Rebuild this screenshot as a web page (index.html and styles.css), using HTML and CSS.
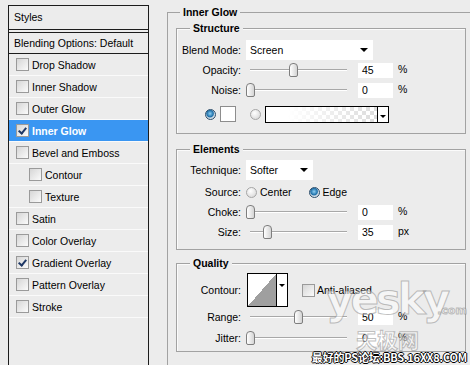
FILE: index.html
```html
<!DOCTYPE html>
<html lang="en">
<head>
    <meta charset="UTF-8">
    <title>Layer Style - Inner Glow</title>
    <link rel="stylesheet" href="styles.css">
</head>
<body>
    <div class="dialog">
        <aside class="styles-panel">
            <div class="panel-head">Styles</div>
            <div class="panel-row blend">Blending Options: Default</div>
            <div class="panel-row"><span class="check"></span>Drop Shadow</div>
            <div class="panel-row"><span class="check"></span>Inner Shadow</div>
            <div class="panel-row"><span class="check"></span>Outer Glow</div>
            <div class="panel-row selected"><span class="check on"></span>Inner Glow</div>
            <div class="panel-row"><span class="check"></span>Bevel and Emboss</div>
            <div class="panel-row sub"><span class="check"></span>Contour</div>
            <div class="panel-row sub"><span class="check"></span>Texture</div>
            <div class="panel-row"><span class="check"></span>Satin</div>
            <div class="panel-row"><span class="check"></span>Color Overlay</div>
            <div class="panel-row"><span class="check on"></span>Gradient Overlay</div>
            <div class="panel-row"><span class="check"></span>Pattern Overlay</div>
            <div class="panel-row"><span class="check"></span>Stroke</div>
        </aside>

        <main class="settings">
            <section class="group outer">
                <div class="group-title">Inner Glow</div>

                <section class="group structure">
                    <div class="group-title">Structure</div>
                    <div class="rows">
                        <div class="row">
                            <span class="lbl">Blend Mode:</span>
                            <div class="select blend-mode">Screen<span class="caret"></span></div>
                        </div>
                        <div class="row">
                            <span class="lbl">Opacity:</span>
                            <div class="slider"><div class="track"></div><div class="thumb" style="left:43px"></div></div>
                            <div class="num">45</div><span class="unit">%</span>
                        </div>
                        <div class="row">
                            <span class="lbl">Noise:</span>
                            <div class="slider"><div class="track"></div><div class="thumb" style="left:0px"></div></div>
                            <div class="num">0</div><span class="unit">%</span>
                        </div>
                        <div class="row colors">
                            <span class="radio on"></span>
                            <span class="swatch"></span>
                            <span class="radio gap"></span>
                            <div class="gradient"><div class="checker"></div><div class="gradient-arrow"><span class="caret small"></span></div></div>
                        </div>
                    </div>
                </section>

                <section class="group elements">
                    <div class="group-title">Elements</div>
                    <div class="rows">
                        <div class="row">
                            <span class="lbl">Technique:</span>
                            <div class="select technique">Softer<span class="caret"></span></div>
                        </div>
                        <div class="row source">
                            <span class="lbl">Source:</span>
                            <span class="radio"></span><span class="opt">Center</span>
                            <span class="radio on"></span><span class="opt">Edge</span>
                        </div>
                        <div class="row">
                            <span class="lbl">Choke:</span>
                            <div class="slider"><div class="track"></div><div class="thumb" style="left:0px"></div></div>
                            <div class="num">0</div><span class="unit">%</span>
                        </div>
                        <div class="row">
                            <span class="lbl">Size:</span>
                            <div class="slider"><div class="track"></div><div class="thumb" style="left:17px"></div></div>
                            <div class="num">35</div><span class="unit">px</span>
                        </div>
                    </div>
                </section>

                <section class="group quality">
                    <div class="group-title">Quality</div>
                    <div class="rows">
                        <div class="row contour-row">
                            <span class="lbl">Contour:</span>
                            <div class="contour"><div class="curve"></div><div class="contour-arrow"><span class="caret small"></span></div></div>
                            <span class="check"></span><span class="opt">Anti-aliased</span>
                        </div>
                        <div class="row">
                            <span class="lbl">Range:</span>
                            <div class="slider"><div class="track"></div><div class="thumb" style="left:48px"></div></div>
                            <div class="num">50</div><span class="unit">%</span>
                        </div>
                        <div class="row jitter">
                            <span class="lbl">Jitter:</span>
                            <div class="slider"><div class="track"></div><div class="thumb" style="left:0px"></div></div>
                            <div class="num">0</div><span class="unit">%</span>
                        </div>
                    </div>
                </section>
            </section>
        </main>

        <div class="watermark">
            <div class="wm-logo">yesky<span class="wm-com">.com</span></div>
            <div class="wm-cn">天极网</div>
        </div>
        <div class="forum-tag">最好的PS论坛:BBS.16XX8.COM</div>
    </div>
</body>
</html>
```

FILE: styles.css
```css
:root {
    --bg: #ececec;
    --line: #a2a2a2;
    --select-blue: #3a96f2;
}

body {
    margin: 0;
    width: 470px;
    height: 365px;
    overflow: hidden;
    background: var(--bg);
    font-family: "Liberation Sans", Arial, sans-serif;
    font-size: 10.5px;
    color: #000;
}

.dialog {
    position: relative;
    display: flex;
    align-items: flex-start;
    height: 365px;
    overflow: hidden;
}

/* left list of styles */
.styles-panel {
    width: 141px;
    height: 365px;
    margin: 5px 0 0 8px;
    border: 1px solid #1c1c1c;
    border-bottom: none;
    box-sizing: border-box;
    flex-shrink: 0;
}

.panel-head {
    height: 23px;
    line-height: 23px;
    padding-left: 5px;
    border-bottom: 1px solid #1c1c1c;
}

.panel-row {
    display: flex;
    align-items: center;
    height: 21px;
    padding-left: 7px;
    border-bottom: 1px solid #fafafa;
}

.panel-row.blend {
    height: 20px;
    margin-top: 2px;
    padding-left: 5px;
    border-top: 1px solid #1c1c1c;
    border-bottom: 1px solid #1c1c1c;
}

.panel-row.sub {
    padding-left: 20px;
}

.panel-row.selected {
    background: var(--select-blue);
    color: #fff;
    font-weight: bold;
}

.check {
    width: 11px;
    height: 11px;
    margin-right: 3px;
    border: 1px solid #9a9a9a;
    background: linear-gradient(135deg, #d6d6d6, #fbfbfb);
    flex-shrink: 0;
    position: relative;
}

.check.on::after {
    content: "";
    position: absolute;
    left: 3px;
    top: 1px;
    width: 3px;
    height: 6px;
    border-right: 2px solid #1e3866;
    border-bottom: 2px solid #1e3866;
    transform: rotate(40deg);
}

/* right settings */
.settings {
    margin-left: 18px;
    flex-shrink: 0;
}

.group {
    border: 1px solid var(--line);
    box-shadow: inset 1px 1px 0 #fbfbfb;
}

.group-title {
    width: fit-content;
    height: 13px;
    line-height: 13px;
    margin: -7px 0 0 12px;
    padding: 0 3px;
    background: var(--bg);
    font-weight: bold;
}

.group.outer {
    width: 302px;
    height: 353px;
    margin-top: 12px;
    border-right: none;
    border-bottom: none;
    box-shadow: none;
}

.group.structure,
.group.elements,
.group.quality {
    width: 288px;
    margin-left: 8px;
}

.structure {
    margin-top: 9px;
}

.structure .group-title,
.elements .group-title,
.quality .group-title {
    margin-left: 13px;
}

.structure .rows {
    margin-top: 5px;
    padding-bottom: 9px;
}

.elements {
    margin-top: 15px;
}

.elements .rows {
    margin-top: 4px;
    padding-bottom: 7px;
}

.quality {
    margin-top: 13px;
}

.quality .rows {
    margin-top: 3px;
    padding-bottom: 3px;
}

.row {
    display: flex;
    align-items: center;
    height: 20px;
}

.lbl {
    width: 64px;
    margin-right: 5px;
    text-align: right;
    flex-shrink: 0;
}

.select {
    position: relative;
    height: 20px;
    padding-left: 4px;
    display: flex;
    align-items: center;
    background: #fff;
    box-sizing: border-box;
}

.select.blend-mode {
    width: 127px;
}

.select.technique {
    width: 67px;
}

.caret {
    position: absolute;
    right: 5px;
    top: 8px;
    border-left: 4px solid transparent;
    border-right: 4px solid transparent;
    border-top: 4px solid #000;
}

.caret.small {
    right: 2px;
    border-left-width: 3px;
    border-right-width: 3px;
    border-top-width: 3px;
}

.slider {
    position: relative;
    width: 105px;
    height: 20px;
    margin-right: 7px;
}

.track {
    position: absolute;
    left: 4px;
    right: 4px;
    top: 9px;
    border-top: 1px solid #a8a8a8;
    border-bottom: 1px solid #fff;
}

.thumb {
    position: absolute;
    top: 3px;
    width: 7px;
    height: 12px;
    border: 1px solid #7e7e7e;
    border-radius: 4px 4px 2px 2px;
    background: linear-gradient(to right, #fff, #d4d4d4);
}

.num {
    width: 35px;
    height: 15px;
    padding-left: 4px;
    line-height: 15px;
    background: #fff;
    box-sizing: border-box;
}

.unit {
    margin-left: 5px;
    margin-top: -3px;
}

/* colour choice row */
.row.colors {
    margin-top: 4px;
    padding-left: 28px;
}

.radio {
    width: 11px;
    height: 11px;
    border-radius: 50%;
    border: 1px solid #a6a6a6;
    background: radial-gradient(circle at 40% 35%, #fff, #d2d2d2);
    box-sizing: border-box;
    flex-shrink: 0;
}

.radio.on {
    border-color: #2b4d6b;
    background: radial-gradient(circle at 45% 40%, #8fd0f4 0, #1d6fa8 45%, #cfdbe5 60%, #e8eef2 100%);
}

.swatch {
    width: 16px;
    height: 16px;
    margin-left: 4px;
    border: 1px solid #8d8d8d;
    background: #fff;
    box-sizing: border-box;
}

.radio.gap {
    margin-left: 14px;
}

.gradient {
    display: flex;
    width: 124px;
    height: 17px;
    margin-left: 4px;
    border: 1px solid #000;
    box-sizing: border-box;
}

.checker {
    flex: 1;
    background:
        linear-gradient(to right, #fff 20%, rgba(255, 255, 255, 0)),
        conic-gradient(#dcdcdc 25%, #fff 0 50%, #dcdcdc 0 75%, #fff 0) 0 0 / 8px 8px;
}

.gradient-arrow,
.contour-arrow {
    position: relative;
    width: 10px;
    border-left: 1px solid #000;
    background: #fff;
}

/* elements */
.row.source {
    margin-top: 2px;
}

.source .radio {
    margin-right: 3px;
}

.source .opt {
    margin-right: 17px;
}

/* quality */
.row.contour-row {
    height: 34px;
}

.contour {
    display: flex;
    width: 41px;
    height: 34px;
    margin-left: 1px;
    margin-right: 14px;
    border: 1px solid #000;
    box-sizing: border-box;
}

.curve {
    flex: 1;
    background: linear-gradient(to top left, #9f9f9f 50%, #fff 50%);
}

.contour-arrow .caret {
    top: 10px;
}

.contour-row .check {
    margin-right: 2px;
}

.row.jitter {
    margin-top: 1px;
}

/* overlays from the source image */
.watermark {
    position: absolute;
    left: 326px;
    top: 276px;
    color: rgba(255, 255, 255, 0.5);
    -webkit-text-stroke: 1px rgba(130, 130, 130, 0.5);
    font-family: "DejaVu Sans", sans-serif;
    font-weight: bold;
}

.wm-logo {
    font-size: 42px;
    line-height: 48px;
    letter-spacing: -3px;
}

.wm-com {
    margin-left: -10px;
    font-size: 11px;
    letter-spacing: 0;
}

.wm-cn {
    margin: -8px 0 0 30px;
    font-family: "Noto Sans CJK SC", sans-serif;
    font-size: 21px;
    line-height: 24px;
}

.forum-tag {
    position: absolute;
    right: 3px;
    bottom: 0;
    color: #fff;
    font-family: "Noto Sans CJK SC", sans-serif;
    font-size: 11px;
    font-weight: bold;
    letter-spacing: -0.2px;
    line-height: 15px;
    text-shadow: 1px 0 0 #000, -1px 0 0 #000, 0 1px 0 #000, 0 -1px 0 #000;
}
```
